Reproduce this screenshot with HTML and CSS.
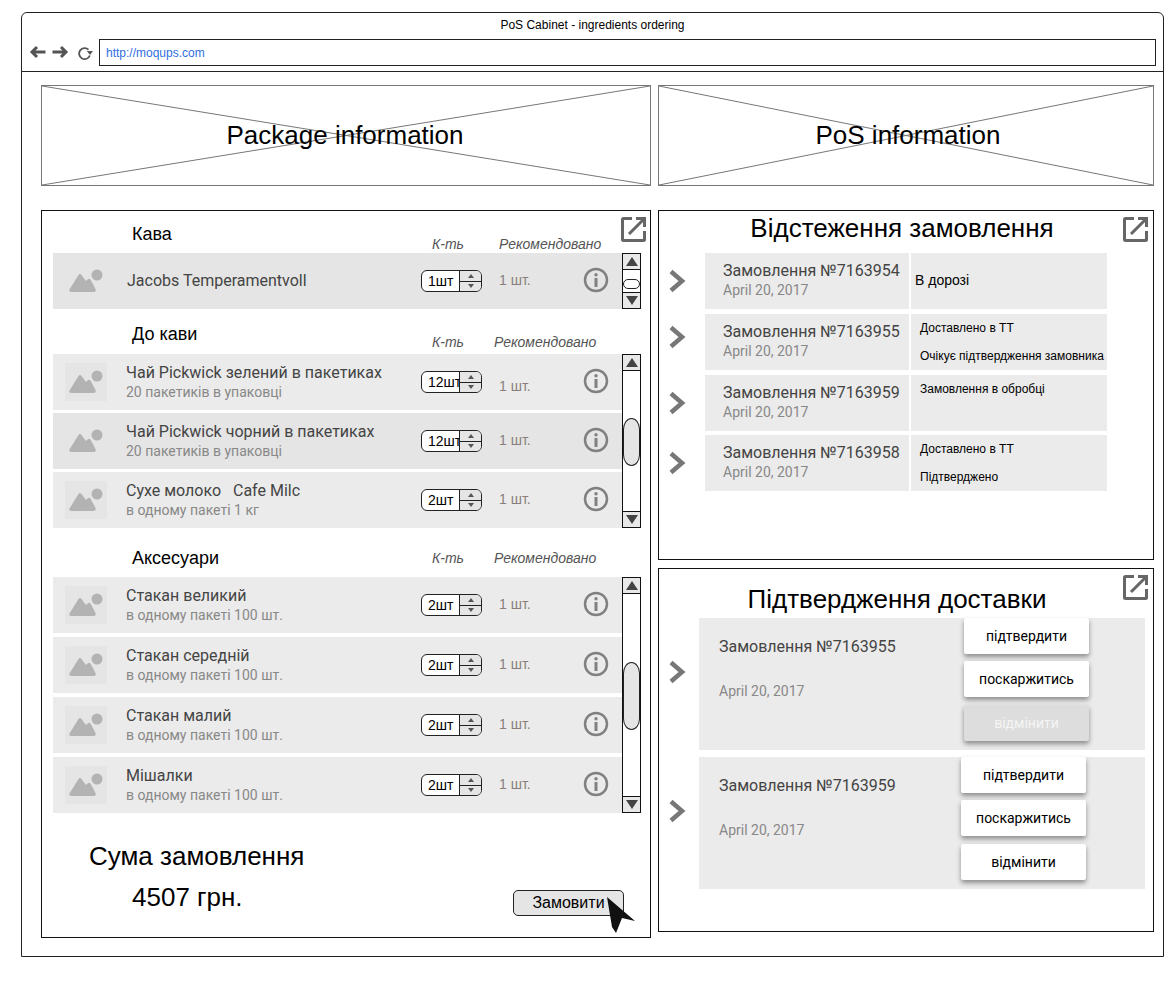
FILE: index.html
```html
<!DOCTYPE html>
<html lang="en">
<head>
  <meta charset="UTF-8">
  <title>PoS Cabinet - ingredients ordering</title>
  <link rel="stylesheet" href="styles.css">
</head>
<body>

  <svg class="sprite" width="0" height="0">
    <symbol id="pic" viewBox="0 0 42 38">
      <circle cx="32" cy="13" r="5.5"/>
      <path d="M4.500 27.500 L13.500 13 Q15 11 16.500 13 L21 19 L22.500 17.500 Q24 16 25.500 17.500 L30.500 27 Q31.500 30 28.500 30 H6.500 Q3.500 30 4.500 27.500 Z"/>
    </symbol>
    <symbol id="info" viewBox="0 0 26 26">
      <circle cx="13" cy="13" r="11" fill="none" stroke="currentColor" stroke-width="2.500"/>
      <circle cx="13" cy="7.800" r="1.700" fill="currentColor"/>
      <rect x="11.500" y="11" width="3" height="9" fill="currentColor"/>
    </symbol>
    <symbol id="open" viewBox="0 0 26 26">
      <path d="M11 2.500H2.500a1 1 0 0 0-1 1V23.500a1 1 0 0 0 1 1H22.500a1 1 0 0 0 1-1V15" fill="none" stroke="currentColor" stroke-width="3"/>
      <path d="M8 18 L23 3" fill="none" stroke="currentColor" stroke-width="3"/>
      <path d="M15 1H25V11H22V4H15Z" fill="currentColor"/>
    </symbol>
    <symbol id="chev" viewBox="0 0 18 24">
      <path d="M3 2.500 L14 12 L3 21.500" fill="none" stroke="currentColor" stroke-width="4.500"/>
    </symbol>
  </svg>

  <div class="browser">
    <div class="browser-title">PoS Cabinet - ingredients ordering</div>
    <div class="browser-nav">
      <svg class="nav-icon" width="17" height="16" viewBox="0 0 17 16"><path d="M8 3 L3 8 L8 13 M3 8 H16.500" fill="none" stroke="#555" stroke-width="3"/></svg>
      <svg class="nav-icon" width="17" height="16" viewBox="0 0 17 16"><path d="M9 3 L14 8 L9 13 M14 8 H0.500" fill="none" stroke="#555" stroke-width="3"/></svg>
      <svg class="nav-icon reload" width="15" height="15" viewBox="0 0 15 15"><path d="M10.500 3.700 A5.500 5.500 0 1 0 11.800 9.500" fill="none" stroke="#555" stroke-width="1.800"/><path d="M8.800 5 H15 L12 9 Z" fill="#555"/></svg>
      <div class="url-box">http://moqups.com</div>
    </div>

    <div class="content">
      <div class="placeholder placeholder-pack">
        <svg class="cross" viewBox="0 0 100 100" preserveAspectRatio="none"><path d="M0 0 L100 100 M100 0 L0 100" stroke="#777" stroke-width="1" vector-effect="non-scaling-stroke"/></svg>
        <span>Package information</span>
      </div>
      <div class="placeholder placeholder-pos">
        <svg class="cross" viewBox="0 0 100 100" preserveAspectRatio="none"><path d="M0 0 L100 100 M100 0 L0 100" stroke="#777" stroke-width="1" vector-effect="non-scaling-stroke"/></svg>
        <span>PoS information</span>
      </div>

      <!-- order form -->
      <div class="panel order-panel">
        <svg class="open-icon"><use href="#open"/></svg>

        <div class="section-head head-coffee">
          <div class="cat">Кава</div>
          <div class="col-qty">К-ть</div>
          <div class="col-rec">Рекомендовано</div>
        </div>
        <div class="section-body">
          <div class="rows">
            <div class="row dark">
              <svg class="thumb"><use href="#pic"/></svg>
              <div class="name single">Jacobs Temperamentvoll</div>
              <div class="spinner"><span class="spin-val">1шт</span><span class="spin-btns"><i class="up"></i><i class="down"></i></span></div>
              <div class="rec">1 шт.</div>
              <svg class="info"><use href="#info"/></svg>
            </div>
          </div>
          <div class="scroll">
            <div class="sb-btn"><i class="up"></i></div>
            <div class="track"><div class="handle handle-a"></div></div>
            <div class="sb-btn"><i class="down"></i></div>
          </div>
        </div>

        <div class="section-head head-extra">
          <div class="cat">До кави</div>
          <div class="col-qty">К-ть</div>
          <div class="col-rec">Рекомендовано</div>
        </div>
        <div class="section-body">
          <div class="rows">
            <div class="row">
              <svg class="thumb"><use href="#pic"/></svg>
              <div class="name"><div>Чай Pickwick зелений в пакетиках</div><small>20 пакетиків в упаковці</small></div>
              <div class="spinner"><span class="spin-val">12шт</span><span class="spin-btns"><i class="up"></i><i class="down"></i></span></div>
              <div class="rec rec-low">1 шт.</div>
              <svg class="info"><use href="#info"/></svg>
            </div>
            <div class="row dark">
              <svg class="thumb"><use href="#pic"/></svg>
              <div class="name"><div>Чай Pickwick чорний в пакетиках</div><small>20 пакетиків в упаковці</small></div>
              <div class="spinner"><span class="spin-val">12шт</span><span class="spin-btns"><i class="up"></i><i class="down"></i></span></div>
              <div class="rec">1 шт.</div>
              <svg class="info"><use href="#info"/></svg>
            </div>
            <div class="row">
              <svg class="thumb"><use href="#pic"/></svg>
              <div class="name"><div>Сухе молоко &nbsp; Cafe Milc</div><small>в одному пакеті 1 кг</small></div>
              <div class="spinner"><span class="spin-val">2шт</span><span class="spin-btns"><i class="up"></i><i class="down"></i></span></div>
              <div class="rec">1 шт.</div>
              <svg class="info"><use href="#info"/></svg>
            </div>
          </div>
          <div class="scroll">
            <div class="sb-btn"><i class="up"></i></div>
            <div class="track"><div class="handle handle-b"></div></div>
            <div class="sb-btn"><i class="down"></i></div>
          </div>
        </div>

        <div class="section-head head-acc">
          <div class="cat">Аксесуари</div>
          <div class="col-qty">К-ть</div>
          <div class="col-rec">Рекомендовано</div>
        </div>
        <div class="section-body">
          <div class="rows rows-wide">
            <div class="row">
              <svg class="thumb"><use href="#pic"/></svg>
              <div class="name"><div>Стакан великий</div><small>в одному пакеті 100 шт.</small></div>
              <div class="spinner"><span class="spin-val">2шт</span><span class="spin-btns"><i class="up"></i><i class="down"></i></span></div>
              <div class="rec">1 шт.</div>
              <svg class="info"><use href="#info"/></svg>
            </div>
            <div class="row">
              <svg class="thumb"><use href="#pic"/></svg>
              <div class="name"><div>Стакан середній</div><small>в одному пакеті 100 шт.</small></div>
              <div class="spinner"><span class="spin-val">2шт</span><span class="spin-btns"><i class="up"></i><i class="down"></i></span></div>
              <div class="rec">1 шт.</div>
              <svg class="info"><use href="#info"/></svg>
            </div>
            <div class="row">
              <svg class="thumb"><use href="#pic"/></svg>
              <div class="name"><div>Стакан малий</div><small>в одному пакеті 100 шт.</small></div>
              <div class="spinner"><span class="spin-val">2шт</span><span class="spin-btns"><i class="up"></i><i class="down"></i></span></div>
              <div class="rec">1 шт.</div>
              <svg class="info"><use href="#info"/></svg>
            </div>
            <div class="row">
              <svg class="thumb"><use href="#pic"/></svg>
              <div class="name"><div>Мішалки</div><small>в одному пакеті 100 шт.</small></div>
              <div class="spinner"><span class="spin-val">2шт</span><span class="spin-btns"><i class="up"></i><i class="down"></i></span></div>
              <div class="rec">1 шт.</div>
              <svg class="info"><use href="#info"/></svg>
            </div>
          </div>
          <div class="scroll">
            <div class="sb-btn"><i class="up"></i></div>
            <div class="track"><div class="handle handle-c"></div></div>
            <div class="sb-btn"><i class="down"></i></div>
          </div>
        </div>

        <div class="order-foot">
          <div class="sum">
            <div class="sum-label">Сума замовлення</div>
            <div class="sum-value">4507 грн.</div>
          </div>
          <div class="order-btn">
            Замовити
            <svg class="cursor" width="30" height="40" viewBox="0 0 30 40"><path d="M1 1 L29 25 L16 22 L10 37 L6 31 Z" fill="#111"/></svg>
          </div>
        </div>
      </div>

      <div class="right-col">
        <!-- tracking -->
        <div class="panel track-panel">
          <svg class="open-icon"><use href="#open"/></svg>
          <div class="panel-title">Відстеження замовлення</div>

          <div class="track-row">
            <svg class="chev"><use href="#chev"/></svg>
            <div class="cell-order"><div class="order-no">Замовлення №7163954</div><div class="order-date">April 20, 2017</div></div>
            <div class="cell-status cell-big">В дорозі</div>
          </div>
          <div class="track-row">
            <svg class="chev chev-up"><use href="#chev"/></svg>
            <div class="cell-order"><div class="order-no">Замовлення №7163955</div><div class="order-date">April 20, 2017</div></div>
            <div class="cell-status"><div>Доставлено в ТТ</div><div>Очікує підтвердження замовника</div></div>
          </div>
          <div class="track-row track-row-tight">
            <svg class="chev"><use href="#chev"/></svg>
            <div class="cell-order"><div class="order-no">Замовлення №7163959</div><div class="order-date">April 20, 2017</div></div>
            <div class="cell-status"><div>Замовлення в обробці</div></div>
          </div>
          <div class="track-row">
            <svg class="chev"><use href="#chev"/></svg>
            <div class="cell-order"><div class="order-no">Замовлення №7163958</div><div class="order-date">April 20, 2017</div></div>
            <div class="cell-status"><div>Доставлено в ТТ</div><div>Підтверджено</div></div>
          </div>
        </div>

        <!-- delivery confirm -->
        <div class="panel confirm-panel">
          <svg class="open-icon"><use href="#open"/></svg>
          <div class="panel-title">Підтвердження доставки</div>

          <div class="confirm-row">
            <svg class="chev chev-up"><use href="#chev"/></svg>
            <div class="confirm-box">
              <div class="confirm-text"><div class="order-no">Замовлення №7163955</div><div class="order-date">April 20, 2017</div></div>
              <div class="btns">
                <div class="btn">підтвердити</div>
                <div class="btn">поскаржитись</div>
                <div class="btn btn-off">відмінити</div>
              </div>
            </div>
          </div>
          <div class="confirm-row">
            <svg class="chev chev-up"><use href="#chev"/></svg>
            <div class="confirm-box">
              <div class="confirm-text"><div class="order-no">Замовлення №7163959</div><div class="order-date">April 20, 2017</div></div>
              <div class="btns btns-left">
                <div class="btn">підтвердити</div>
                <div class="btn">поскаржитись</div>
                <div class="btn">відмінити</div>
              </div>
            </div>
          </div>
        </div>
      </div>
    </div>
  </div>

</body>
</html>
```

FILE: styles.css
```css
body {
  margin: 0;
  padding: 12px 0 0 21px;
  background-color: #fff;
  font-family: "Liberation Sans", Arial, sans-serif;
  color: #000;
}
.sprite {
  display: block;
  height: 0;
}
.browser {
  box-sizing: border-box;
  width: 1143px;
  height: 945px;
  border: 1px solid #222;
  border-radius: 6px 6px 0 0;
}
.browser-title {
  height: 26px;
  line-height: 25px;
  font-size: 12px;
  text-align: center;
}
.browser-nav {
  display: flex;
  align-items: center;
  height: 33px;
  padding: 0 7px 6px 7px;
  box-sizing: border-box;
  border-bottom: 1px solid #222;
}
.nav-icon {
  margin-right: 6px;
}
.reload {
  margin-left: 3px;
  margin-top: 2px;
}
.url-box {
  box-sizing: border-box;
  flex: 1;
  height: 27px;
  padding-left: 6px;
  line-height: 26px;
  border: 1px solid #222;
  font-size: 12px;
  color: #2f6fe0;
}

.content {
  display: grid;
  grid-template-columns: 610px 496px;
  column-gap: 7px;
  row-gap: 24px;
  align-items: start;
  padding: 13px 0 0 19px;
}
.placeholder {
  position: relative;
  box-sizing: border-box;
  height: 101px;
  border: 1px solid #777;
  display: flex;
  align-items: center;
  justify-content: center;
  font-size: 26px;
}
.placeholder span {
  position: relative;
}
.placeholder-pack {
  padding-right: 2px;
}
.placeholder-pos {
  padding-left: 4px;
}
.cross {
  position: absolute;
  left: 0;
  top: 0;
  width: 100%;
  height: 100%;
}

.panel {
  position: relative;
  box-sizing: border-box;
  border: 1px solid #111;
}
.open-icon {
  position: absolute;
  top: 5px;
  right: 4px;
  width: 26px;
  height: 26px;
  color: #666;
}
.order-panel {
  height: 728px;
}
.order-panel .open-icon {
  right: 3px;
}

.section-head {
  position: relative;
  margin-left: 11px;
}
.head-coffee {
  height: 42px;
}
.head-extra {
  height: 45px;
}
.head-acc {
  height: 49px;
}
.cat {
  position: absolute;
  left: 79px;
  font-size: 18px;
  line-height: 22px;
}
.col-qty,
.col-rec {
  position: absolute;
  font-size: 14px;
  font-style: italic;
  line-height: 16px;
  color: #555;
}
.col-qty {
  left: 379px;
}
.col-rec {
  left: 441px;
}
.head-coffee .cat { top: 12px; }
.head-coffee .col-qty,
.head-coffee .col-rec { top: 25px; }
.head-coffee .col-rec { left: 446px; }
.head-extra .cat { top: 14px; }
.head-extra .col-qty,
.head-extra .col-rec { top: 25px; }
.head-acc .cat { top: 19px; }
.head-acc .col-qty,
.head-acc .col-rec { top: 22px; }

.section-body {
  display: flex;
  margin-left: 11px;
}
.rows {
  display: flex;
  flex-direction: column;
  gap: 3px;
  width: 570px;
}
.rows-wide {
  gap: 4px;
}
.row {
  display: flex;
  align-items: center;
  height: 56px;
  background-color: #ebebeb;
}
.row.dark {
  background-color: #e5e5e5;
}
.thumb {
  flex: none;
  width: 42px;
  height: 38px;
  margin-left: 12px;
  background-color: #e5e5e5;
  fill: #b3b3b3;
}
.name {
  width: 295px;
  margin-left: 19px;
  font-family: Roboto, sans-serif;
  font-size: 16px;
  line-height: 20px;
  color: #444;
}
.name div {
  padding-top: 1px;
  margin-bottom: -1px;
}
.name.single {
  margin-left: 20px;
  width: 294px;
}
.name small {
  display: block;
  font-size: 14px;
  color: #888;
}
.spinner {
  box-sizing: border-box;
  display: flex;
  width: 61px;
  height: 22px;
  border: 1px solid #222;
  border-radius: 6px;
  overflow: hidden;
  background-color: #fff;
  font-size: 14px;
  line-height: 20px;
}
.spin-val {
  flex: none;
  width: 37px;
  padding-left: 6px;
  box-sizing: border-box;
  white-space: nowrap;
}
.spin-btns {
  flex: 1;
  display: flex;
  flex-direction: column;
  border-left: 1px solid #222;
  background-color: #e5e5e5;
}
.spin-btns i {
  flex: 1;
  display: flex;
  align-items: center;
  justify-content: center;
}
.spin-btns i:first-child {
  border-bottom: 1px solid #222;
}
.spin-btns i::after,
.sb-btn i::after {
  content: "";
  display: block;
  border-left: 3px solid transparent;
  border-right: 3px solid transparent;
}
.spin-btns .up::after {
  border-bottom: 4px solid #555;
}
.spin-btns .down::after {
  border-top: 4px solid #555;
}
.rec {
  width: 84px;
  margin-left: 17px;
  margin-bottom: 2px;
  font-size: 14px;
  color: #887f7a;
}
.rec-low {
  padding-top: 10px;
}
.info {
  flex: none;
  width: 26px;
  height: 26px;
  color: #808080;
  margin-bottom: 3px;
}

.scroll {
  box-sizing: border-box;
  display: flex;
  flex-direction: column;
  flex: none;
  width: 19px;
  margin-left: -1px;
  border: 1px solid #111;
  background-color: #fff;
}
.sb-btn {
  flex: none;
  height: 15px;
  display: flex;
  align-items: center;
  justify-content: center;
  background-color: #e8e8e8;
}
.sb-btn:first-child {
  border-bottom: 1px solid #111;
}
.sb-btn:last-child {
  border-top: 1px solid #111;
}
.sb-btn i::after {
  border-left-width: 6px;
  border-right-width: 6px;
}
.sb-btn .up::after {
  border-bottom: 9px solid #444;
}
.sb-btn .down::after {
  border-top: 9px solid #444;
}
.track {
  flex: 1;
}
.handle {
  box-sizing: border-box;
  border: 1px solid #222;
  background-color: #e5e5e5;
}
.handle-a {
  height: 10px;
  margin-top: 9px;
  border-radius: 5px;
  background-color: #fff;
}
.handle-b {
  height: 48px;
  margin-top: 47px;
  border-radius: 9px / 12px;
}
.handle-c {
  height: 68px;
  margin-top: 68px;
  border-radius: 9px / 12px;
}

.order-foot {
  display: flex;
  justify-content: space-between;
  margin-top: 29px;
  padding: 0 26px 0 47px;
}
.sum-label {
  font-size: 26px;
  line-height: 28px;
}
.sum-value {
  margin-top: 12px;
  margin-left: 43px;
  font-size: 26px;
  line-height: 30px;
}
.order-btn {
  position: relative;
  box-sizing: border-box;
  width: 111px;
  height: 26px;
  margin-top: 48px;
  border: 1px solid #222;
  border-radius: 5px;
  background-color: #e5e5e5;
  font-size: 16px;
  line-height: 24px;
  text-align: center;
}
.cursor {
  position: absolute;
  left: 92px;
  top: 5px;
}

.right-col {
  display: flex;
  flex-direction: column;
  gap: 8px;
}
.track-panel {
  height: 350px;
}
.confirm-panel {
  height: 364px;
}
.panel-title {
  text-align: center;
  font-size: 26px;
  line-height: 30px;
}
.track-panel .panel-title {
  height: 42px;
  padding-top: 2px;
  box-sizing: border-box;
  margin-right: 8px;
}
.confirm-panel .panel-title {
  height: 49px;
  padding-top: 15px;
  box-sizing: border-box;
  margin-right: 18px;
}
.track-row {
  display: flex;
  height: 56px;
  margin-bottom: 5px;
}
.track-row-tight {
  margin-bottom: 4px;
}
.chev {
  flex: none;
  width: 18px;
  height: 24px;
  margin: 16px 19px 0 9px;
  color: #777;
}
.chev-up {
  margin-top: 11px;
}
.cell-order {
  box-sizing: border-box;
  width: 204px;
  padding: 7px 0 0 18px;
  background-color: #ebebeb;
}
.order-no {
  padding-top: 1px;
  margin-bottom: -1px;
  font-family: Roboto, sans-serif;
  font-size: 16px;
  line-height: 20px;
  color: #444;
}
.order-date {
  font-family: Roboto, sans-serif;
  font-size: 14px;
  line-height: 20px;
  color: #888;
}
.cell-status {
  box-sizing: border-box;
  width: 196px;
  margin-left: 2px;
  padding: 8px 0 0 9px;
  background-color: #ebebeb;
  font-size: 12px;
  line-height: 13px;
  display: flex;
  flex-direction: column;
  gap: 15px;
}
.cell-big {
  padding: 19px 0 0 4px;
  font-size: 14px;
  line-height: 16px;
}
.confirm-row {
  display: flex;
  margin-bottom: 7px;
}
.confirm-row .chev {
  margin: 42px 13px 0 9px;
}
.confirm-box {
  box-sizing: border-box;
  display: flex;
  width: 446px;
  height: 132px;
  background-color: #ebebeb;
}
.confirm-text {
  width: 265px;
  padding: 18px 0 0 20px;
  box-sizing: border-box;
}
.confirm-text .order-date {
  margin-top: 25px;
}
.btns {
  display: flex;
  flex-direction: column;
  gap: 7px;
}
.btns-left {
  margin-left: -3px;
}
.btn {
  box-sizing: border-box;
  width: 125px;
  height: 36px;
  border-radius: 2px;
  background-color: #fff;
  box-shadow: 0 3px 5px rgba(0, 0, 0, 0.4);
  font-family: Roboto, sans-serif;
  font-size: 14px;
  line-height: 36px;
  text-align: center;
}
.btn:last-child {
  margin-top: 1px;
}
.btn-off {
  background-color: #ddd;
  color: #f5f5f5;
}
```
